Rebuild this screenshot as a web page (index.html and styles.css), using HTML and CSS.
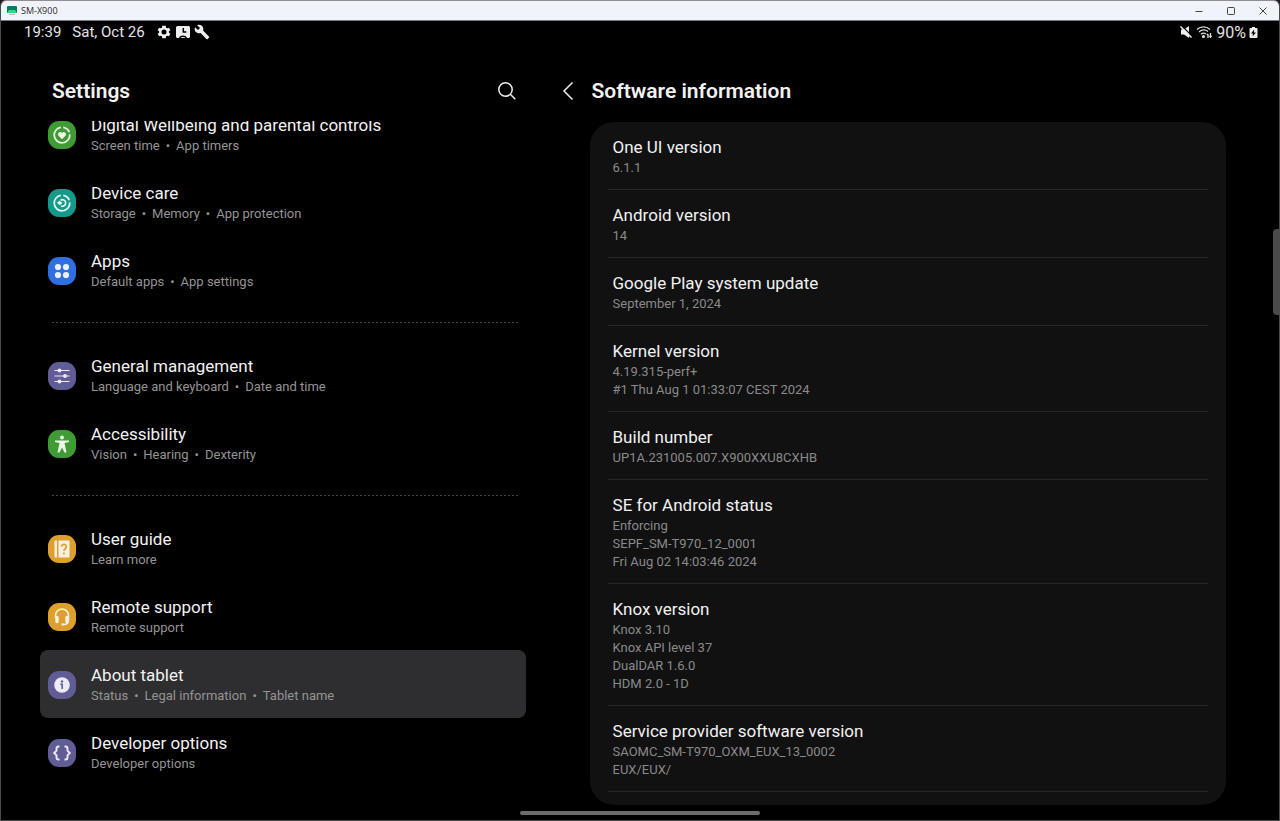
FILE: index.html
```html
<!DOCTYPE html>
<html lang="en">
<head>
<meta charset="utf-8">
<meta name="viewport" content="width=device-width, initial-scale=1">
<title>SM-X900</title>
<link rel="stylesheet" href="styles.css">
</head>
<body>
<div class="window">
  <header class="titlebar">
    <svg class="app-icon" viewBox="0 0 10 10" aria-hidden="true"><rect width="10" height="7" rx="1" fill="#0b7a5c"/><path d="M1 7V5.500a1.500 1.500 0 0 1 1.500-1.500h5A1.500 1.500 0 0 1 9 5.500V7z" fill="#2fdc84"/><rect x="2" y="8" width="6" height="1" fill="#b9bec4"/></svg>
    <span class="app-name">SM-X900</span>
    <div class="window-buttons">
      <button type="button" aria-label="Minimize"><svg viewBox="0 0 10 10"><path d="M1.500 5.500h7"/></svg></button>
      <button type="button" aria-label="Maximize"><svg viewBox="0 0 10 10"><rect x="1.500" y="1.500" width="7" height="7" rx=".8"/></svg></button>
      <button type="button" aria-label="Close"><svg viewBox="0 0 10 10"><path d="M1.500 1.500l7 7M8.500 1.500l-7 7"/></svg></button>
    </div>
  </header>

  <div class="screen">
    <div class="statusbar">
      <span>19:39</span>
      <span>Sat, Oct 26</span>
      <span class="status-icons">
        <svg width="16" height="16" viewBox="0 0 24 24" fill="#eee"><path d="M19.400 13a7.500 7.500 0 0 0 0-2l2.200-1.700-2.200-3.800-2.600 1a8 8 0 0 0-1.700-1L14.700 2.600H9.300l-.4 2.900a8 8 0 0 0-1.700 1l-2.600-1-2.200 3.800L4.600 11a7.500 7.500 0 0 0 0 2l-2.200 1.700 2.200 3.800 2.600-1a8 8 0 0 0 1.700 1l.4 2.900h5.400l.4-2.900a8 8 0 0 0 1.700-1l2.600 1 2.200-3.800zM12 15.800a3.800 3.800 0 1 1 0-7.600 3.800 3.800 0 0 1 0 7.600z" fill-rule="evenodd"/></svg>
        <svg width="16" height="16" viewBox="0 0 16 16"><path fill="#eee" fill-rule="evenodd" d="M2.500 2h11A1.500 1.500 0 0 1 15 3.500v9a1.500 1.500 0 0 1-1.500 1.500h-1.300a4.500 3.800 0 0 0-8.400 0H2.500A1.500 1.500 0 0 1 1 12.500v-9A1.500 1.500 0 0 1 2.500 2z"/><path fill="none" stroke="#000" stroke-width="1.500" d="M8.300 4v4h3"/><path d="M5.500 14a2.800 2 0 0 1 5 0z" fill="#eee"/></svg>
        <svg width="16" height="16" viewBox="0 0 24 24"><path fill="#eee" d="M22.700 19l-9.100-9.100c.9-2.300.4-5-1.500-6.900-2-2-5-2.400-7.400-1.300L9 6 6 9 1.600 4.700C.4 7.100.9 10.100 2.900 12.100c1.900 1.900 4.600 2.400 6.900 1.500l9.100 9.100c.4.400 1 .4 1.400 0l2.300-2.300c.5-.4.5-1.100.1-1.400z"/></svg>
      </span>
      <span class="status-right">
        <svg width="14" height="14" viewBox="0 0 14 14"><path fill="#eee" d="M2 4.500h3l5-3.500v12L5 9.500H2z"/><path stroke="#000" stroke-width="1.200" d="M3 1l11 11"/><path stroke="#eee" stroke-width="1.500" d="M1.500 1.500l11 11"/></svg>
        <svg width="17" height="14" viewBox="0 0 17 14" fill="none" stroke="#ddd" stroke-width="1.300"><path d="M1 4.500a9.500 9.500 0 0 1 13 0M3 7a6.500 6.500 0 0 1 9-.5M5 9.300a4 4 0 0 1 5-.3"/><circle cx="7.500" cy="11.500" r=".9" fill="#ddd"/><path d="M12 13V9M10.800 10.200L12 8.800M14.500 8v4M13.300 10.800l1.200 1.400 1.200-1.400"/></svg>
        <span class="battery">90%</span>
        <svg width="9" height="13" viewBox="0 0 9 13"><path fill="#eee" d="M3 1h3v1h1.500a1 1 0 0 1 1 1v8a1 1 0 0 1-1 1h-6a1 1 0 0 1-1-1V3a1 1 0 0 1 1-1H3z"/><path fill="#000" d="M5.200 3.500L2 7.500h2l-.5 3L7 6.500H5z"/></svg>
      </span>
    </div>

    <div class="panes">
      <section class="sidebar">
        <div class="pane-head sidebar-head">
          <h1>Settings</h1>
          <button type="button" aria-label="Search"><svg width="22" height="22" viewBox="0 0 22 22" fill="none" stroke="#eee" stroke-width="1.500"><circle cx="9.500" cy="9.500" r="6.700"/><path d="M14.300 14.300l5 5"/></svg></button>
        </div>
        <nav class="menu">
          <a class="item" href="#">
            <svg class="icon green" viewBox="0 0 28 28"><circle cx="14" cy="14" r="7.800" fill="none" stroke="#eef5ea" stroke-width="1.700" stroke-dasharray="36 2.500 8 2.500" transform="rotate(-5 14 14)"/><path fill="#eef5ea" d="M14 18.200l-3.500-3.500a2.200 2.200 0 0 1 3.500-2.700 2.200 2.200 0 0 1 3.500 2.700z"/></svg>
            <span class="label"><span class="title">Digital Wellbeing and parental controls</span><span class="sub">Screen time<i>•</i>App timers</span></span>
          </a>
          <a class="item" href="#">
            <svg class="icon teal" viewBox="0 0 28 28"><circle cx="14" cy="14" r="7.800" fill="none" stroke="#e6f6f2" stroke-width="1.700" stroke-dasharray="36 2.500 8 2.500" transform="rotate(-5 14 14)"/><path d="M12.500 11.300a3.300 3.300 0 1 1 .5 5.700" fill="none" stroke="#e6f6f2" stroke-width="1.600"/><path d="M9 13.800l2.200-2 3.300 2-2.800 2.500z" fill="#e6f6f2"/></svg>
            <span class="label"><span class="title">Device care</span><span class="sub">Storage<i>•</i>Memory<i>•</i>App protection</span></span>
          </a>
          <a class="item" href="#">
            <svg class="icon blue" viewBox="0 0 28 28" fill="#eaf0fc"><circle cx="10" cy="10" r="3.100"/><circle cx="18" cy="10" r="3.100"/><circle cx="10" cy="18" r="3.100"/><circle cx="18" cy="18" r="3.100"/></svg>
            <span class="label"><span class="title">Apps</span><span class="sub">Default apps<i>•</i>App settings</span></span>
          </a>
          <hr>
          <a class="item" href="#">
            <svg class="icon violet" viewBox="0 0 28 28" fill="#ecebf6"><path d="M6.500 8.500h15M6.500 14h15M6.500 19.500h15" stroke="#ecebf6" stroke-width="1.100"/><circle cx="11.500" cy="8.500" r="1.900"/><circle cx="17" cy="14" r="1.900"/><circle cx="11.500" cy="19.500" r="1.900"/></svg>
            <span class="label"><span class="title">General management</span><span class="sub">Language and keyboard<i>•</i>Date and time</span></span>
          </a>
          <a class="item" href="#">
            <svg class="icon green" viewBox="0 0 28 28" fill="#eef5ea"><circle cx="14" cy="7.500" r="1.900"/><path d="M7 10.500h14v1.500l-4.500 1 2 9.500h-2L14 17.500l-2.500 5h-2l2-9.500-4.500-1z"/></svg>
            <span class="label"><span class="title">Accessibility</span><span class="sub">Vision<i>•</i>Hearing<i>•</i>Dexterity</span></span>
          </a>
          <hr>
          <a class="item" href="#">
            <svg class="icon amber" viewBox="0 0 28 28"><path fill="#f7f0e2" d="M7.500 5.500H9v17H7.500a1 1 0 0 1-1-1v-15a1 1 0 0 1 1-1zM10.500 5.500h10a1 1 0 0 1 1 1v15a1 1 0 0 1-1 1h-10z"/><path d="M13.500 11.800a2.400 2.400 0 1 1 3.800 1.900c-.9.700-1.400 1-1.400 2.300" fill="none" stroke="#dda02c" stroke-width="1.700"/><circle cx="15.900" cy="18.500" r="1.100" fill="#dda02c"/></svg>
            <span class="label"><span class="title">User guide</span><span class="sub">Learn more</span></span>
          </a>
          <a class="item" href="#">
            <svg class="icon amber" viewBox="0 0 28 28" fill="none" stroke="#f7f0e2"><path d="M7.500 15v-2.500a6.500 6.500 0 0 1 13 0V17c0 3-2 4.500-5 4.500" stroke-width="1.500"/><path d="M9 14.500v4M19 14.500v4" stroke-width="3.400" stroke-linecap="round"/><path d="M13.500 21.500h2.500" stroke-width="2"/></svg>
            <span class="label"><span class="title">Remote support</span><span class="sub">Remote support</span></span>
          </a>
          <a class="item selected" href="#" aria-current="page">
            <svg class="icon violet" viewBox="0 0 28 28"><circle cx="14" cy="14" r="7.800" fill="#ecebf6"/><circle cx="14" cy="10.500" r="1.200" fill="#5f5c96"/><path d="M12.300 13.300h1.900v4.700" fill="none" stroke="#5f5c96" stroke-width="1.600"/></svg>
            <span class="label"><span class="title">About tablet</span><span class="sub">Status<i>•</i>Legal information<i>•</i>Tablet name</span></span>
          </a>
          <a class="item" href="#">
            <svg class="icon violet" viewBox="0 0 28 28" fill="none" stroke="#ecebf6" stroke-width="1.900"><path d="M11.500 7.500h-1a2 2 0 0 0-2 2v2.200L6.200 14l2.300 2.300v2.200a2 2 0 0 0 2 2h1M16.500 7.500h1a2 2 0 0 1 2 2v2.200l2.300 2.300-2.300 2.300v2.200a2 2 0 0 1-2 2h-1"/></svg>
            <span class="label"><span class="title">Developer options</span><span class="sub">Developer options</span></span>
          </a>
        </nav>
      </section>

      <main class="detail">
        <div class="pane-head detail-head">
          <button type="button" aria-label="Back"><svg width="12" height="20" viewBox="0 0 12 20" fill="none" stroke="#eee" stroke-width="1.500"><path d="M10.500 1.500L2 10l8.500 8.500"/></svg></button>
          <h2>Software information</h2>
        </div>
        <div class="card">
          <div class="entry"><h3 class="title">One UI version</h3><p class="sub">6.1.1</p></div>
          <div class="entry"><h3 class="title">Android version</h3><p class="sub">14</p></div>
          <div class="entry"><h3 class="title">Google Play system update</h3><p class="sub">September 1, 2024</p></div>
          <div class="entry"><h3 class="title">Kernel version</h3><p class="sub">4.19.315-perf+<br>#1 Thu Aug 1 01:33:07 CEST 2024</p></div>
          <div class="entry"><h3 class="title">Build number</h3><p class="sub">UP1A.231005.007.X900XXU8CXHB</p></div>
          <div class="entry"><h3 class="title">SE for Android status</h3><p class="sub">Enforcing<br>SEPF_SM-T970_12_0001<br>Fri Aug 02 14:03:46 2024</p></div>
          <div class="entry"><h3 class="title">Knox version</h3><p class="sub">Knox 3.10<br>Knox API level 37<br>DualDAR 1.6.0<br>HDM 2.0 - 1D</p></div>
          <div class="entry"><h3 class="title">Service provider software version</h3><p class="sub">SAOMC_SM-T970_OXM_EUX_13_0002<br>EUX/EUX/</p></div>
        </div>
      </main>
    </div>
    <div class="edge-handle"></div>
    <div class="home-bar"></div>
  </div>
</div>
</body>
</html>
```
FILE: styles.css
```css
* { box-sizing: border-box; }

body {
  margin: 0;
  background: #1c1c1e;
  color: #f2f2f2;
  font-family: Roboto, "Liberation Sans", sans-serif;
}

h1, h2, h3, p { margin: 0; font-weight: 400; }

button {
  display: flex;
  align-items: center;
  justify-content: center;
  padding: 0;
  border: 0;
  background: none;
  color: inherit;
}

a { color: inherit; text-decoration: none; }

.window {
  display: flex;
  flex-direction: column;
  height: 100vh;
  border: 1px solid #4a4a4c;
  border-top-color: #8f8f93;
  border-radius: 6px 6px 0 0;
  overflow: hidden;
  background: #000;
}

.titlebar {
  display: flex;
  flex: none;
  align-items: center;
  height: 20px;
  padding: 0 4px 0 6px;
  border-bottom: 1px solid #77797d;
  background: #f0f3fa;
  color: #2a2a2c;
}

.app-icon { width: 10px; height: 10px; }
.app-name { margin-left: 4px; font: 9px "Open Sans", sans-serif; }

.window-buttons { display: flex; margin-left: auto; }
.window-buttons button { width: 32px; height: 18px; }
.window-buttons svg {
  width: 10px;
  height: 10px;
  fill: none;
  stroke: #444;
  stroke-width: 1;
}
.window-buttons button:last-child { width: 24px; margin-left: 4px; }

.screen {
  position: relative;
  display: flex;
  flex: 1;
  flex-direction: column;
  min-height: 0;
}

.statusbar {
  display: flex;
  flex: none;
  align-items: center;
  gap: 11px;
  height: 22px;
  padding: 0 21px 0 23px;
  font-size: 15px;
  color: #e4e4e4;
}
.status-icons { display: flex; gap: 3px; }
.status-right { display: flex; align-items: center; gap: 3px; margin-left: auto; }
.battery { font-size: 16px; }

.panes {
  display: grid;
  grid-template-columns: 43fr 57fr;
  flex: 1;
  min-height: 0;
}

.sidebar, .detail {
  display: flex;
  flex-direction: column;
  min-height: 0;
}
.sidebar { padding: 0 25px 0 39px; }
.detail { padding: 0 53px 15px 0; }

.pane-head {
  display: flex;
  flex: none;
  align-items: center;
  height: 78px;
  padding-top: 17px;
}
.pane-head h1, .pane-head h2 { font-size: 21px; font-weight: 600; line-height: 28px; }
.sidebar-head { justify-content: space-between; padding-left: 12px; padding-right: 8px; }
.detail-head { gap: 18px; padding-left: 11px; }

.menu { flex: 1; min-height: 0; overflow: hidden; }

.item {
  display: flex;
  align-items: center;
  gap: 15px;
  padding: 14px 8px 13px;
  border-radius: 8px;
}
/* the list is scrolled, its first row slides under the heading */
.item:first-child { margin-top: -21px; }
.item.selected { background: #2e2e30; }

.icon { flex: none; width: 28px; height: 28px; border-radius: 11px; }
.green { background: #3f9c35; }
.teal { background: #14998a; }
.blue { background: #2f6fe4; }
.violet { background: #5f5c96; }
.amber { background: #dda02c; }

.title { display: block; font-size: 17px; font-weight: 400; line-height: 22px; }
.sub { display: block; margin-top: 1px; font-size: 13px; line-height: 18px; color: #949494; }
.sub i { margin: 0 6px; font-style: normal; }

.menu hr {
  height: 1px;
  margin: 18px 8px 18px 12px;
  border: 0;
  background: repeating-linear-gradient(90deg, #444 0 2px, transparent 2px 4px);
}

.card {
  flex: 1;
  min-height: 0;
  margin: 1px 0 0 39px;
  padding: 0 18px;
  border-radius: 24px;
  overflow: hidden;
  background: #111;
}
.entry { padding: 14px 5px 12px; border-bottom: 1px solid #272727; }
.entry .sub { color: #8a8a8a; }

.edge-handle {
  position: absolute;
  top: 208px;
  right: 0;
  width: 6px;
  height: 86px;
  border-radius: 4px 0 0 4px;
  background: #4a4a4c;
}

.home-bar {
  position: absolute;
  bottom: 5px;
  left: 50%;
  width: 240px;
  height: 4px;
  margin-left: -120px;
  border-radius: 2px;
  background: #6c6c6c;
}
```
